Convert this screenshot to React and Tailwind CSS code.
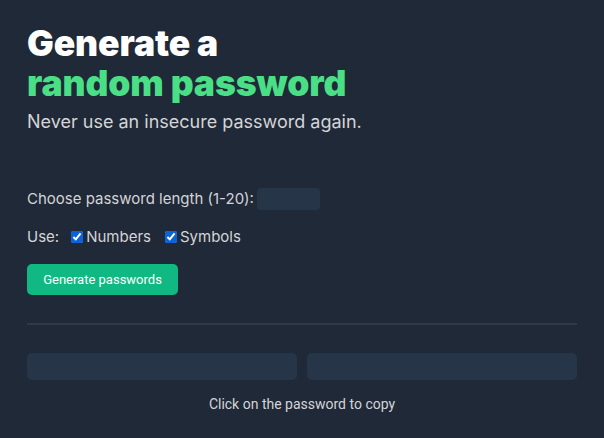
export default function App() {
  return (
    <div className="min-h-[438px] bg-[#1f2937] px-[27px] pt-[24px] font-['Inter',sans-serif]">
      <h1 className="text-[35.5px] font-black leading-[40px] text-white tracking-[-0.1px]">
        Generate a
        <br />
        <span className="text-[#4adf86]">random password</span>
      </h1>
      <p className="mt-[5px] text-[18px] leading-[26px] text-[#d5d4d8]">
        Never use an insecure password again.
      </p>

      <div className="mt-[53px] flex items-center gap-[3px] text-[15px] text-[#d5d4d8]">
        <label>Choose password length (1-20):</label>
        <input className="h-[22px] w-[63px] rounded-[4px] bg-[#273549] outline-none" />
      </div>

      <div className="mt-[15px] flex items-center text-[15px] text-[#d5d4d8]">
        <span className="mr-[12px]">Use:</span>
        <input type="checkbox" defaultChecked className="mr-[3px] h-[12px] w-[12px] accent-[#0b63d8]" />
        <span className="mr-[14px]">Numbers</span>
        <input type="checkbox" defaultChecked className="mr-[3px] h-[12px] w-[12px] accent-[#0b63d8]" />
        <span>Symbols</span>
      </div>

      <button className="mt-[16px] h-[31px] w-[151px] rounded-[5px] bg-[#10b981] font-['Roboto',sans-serif] text-[13px] text-white">
        Generate passwords
      </button>

      <div className="mt-[28px] h-[2px] bg-[#2c3a4c]" />

      <div className="mt-[28px] grid grid-cols-2 gap-[10px]">
        <div className="h-[27px] rounded-[5px] bg-[#273549]" />
        <div className="h-[27px] rounded-[5px] bg-[#273549]" />
      </div>

      <p className="mt-[14px] text-center font-['Roboto',sans-serif] text-[14px] text-[#d5d4d8]">
        Click on the password to copy
      </p>
    </div>
  )
}
